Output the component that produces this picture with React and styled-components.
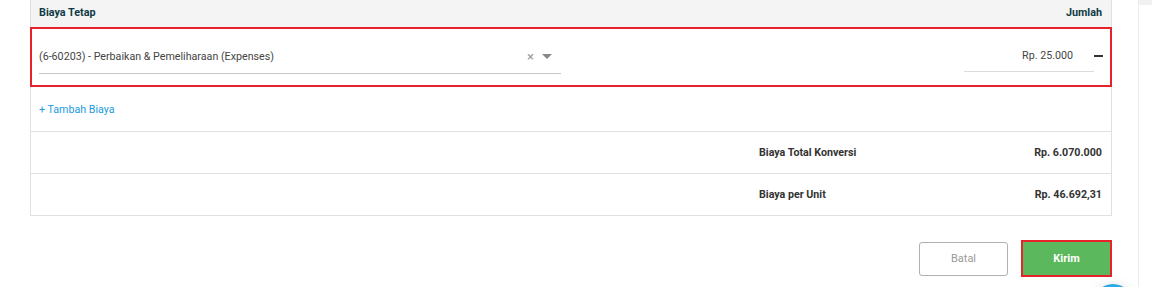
import React from "react";
import styled, { createGlobalStyle } from "styled-components";

const GlobalStyle = createGlobalStyle`
  html, body {
    margin: 0;
    padding: 0;
    background: #ffffff;
    font-family: Roboto, "Liberation Sans", Arial, sans-serif;
    overflow: hidden;
  }
`;

const Screen = styled.div`
  display: flex;
  width: 1152px;
  height: 287px;
  position: relative;
  overflow: hidden;
`;

const Panel = styled.div`
  width: 1139px;
  border-right: 1px solid #ececec;
  padding-left: 30px;
  box-sizing: border-box;
`;

const Gutter = styled.div`
  flex: 1;
  display: flex;
  flex-direction: column;
`;

const GutterTop = styled.div`
  height: 5px;
  background: #f1f1f1;
`;

const Table = styled.div`
  width: 1082px;
  border-left: 1px solid #e0e0e0;
  border-right: 1px solid #e0e0e0;
  border-bottom: 1px solid #e0e0e0;
  box-sizing: border-box;
`;

const HeadRow = styled.div`
  height: 27px;
  background: #f4f4f4;
  display: flex;
  align-items: center;
  justify-content: space-between;
  padding: 0 9px 2px 8px;
  box-sizing: border-box;
  font-size: 10.8px;
  font-weight: 700;
  color: #0f3a44;
`;

const ItemRow = styled.div`
  height: 60px;
  margin: 0 -1px;
  border: 2px solid #e8222a;
  display: flex;
  align-items: center;
  padding: 0 7px 0 7px;
  box-sizing: border-box;
`;

const Select = styled.div`
  width: 522px;
  height: 30px;
  margin-top: 3px;
  border-bottom: 1px solid #c8c8c8;
  display: flex;
  align-items: center;
  font-size: 10.7px;
  color: #444;
  box-sizing: border-box;
  padding-bottom: 4px;
`;

const SelectText = styled.span`
  flex: 1;
`;

const Clear = styled.span`
  color: #999;
  font-size: 13px;
  margin-right: 8px;
  line-height: 1;
`;

const Caret = styled.span`
  width: 0;
  height: 0;
  border-left: 5px solid transparent;
  border-right: 5px solid transparent;
  border-top: 5px solid #888;
  margin-right: 9px;
`;

const Amount = styled.div`
  margin-left: auto;
  width: 130px;
  height: 28px;
  margin-top: 1px;
  border-bottom: 1px solid #dcdcdc;
  display: flex;
  align-items: center;
  justify-content: flex-end;
  padding: 0 21px 3px 0;
  box-sizing: border-box;
  font-size: 10.7px;
  color: #444;
`;

const Minus = styled.span`
  width: 9px;
  height: 2px;
  background: #333;
  margin-bottom: 2px;
`;

const AddRow = styled.div`
  height: 44px;
  display: flex;
  align-items: center;
  padding-left: 8px;
  font-size: 10.7px;
  color: #1a9be0;
`;

const SumRow = styled.div`
  height: 42px;
  border-top: 1px solid #e0e0e0;
  display: flex;
  align-items: center;
  padding: 0 9px 0 728px;
  box-sizing: border-box;
  font-size: 10.7px;
  font-weight: 700;
  color: #333;
`;

const SumLabel = styled.span`
  flex: 1;
`;

const Actions = styled.div`
  width: 1082px;
  display: flex;
  justify-content: flex-end;
  align-items: center;
  gap: 13px;
  margin-top: 24px;
`;

const Button = styled.button`
  height: ${(p) => (p.$primary ? "37px" : "34px")};
  width: ${(p) => (p.$primary ? "91px" : "89px")};
  font-family: inherit;
  font-size: 11px;
  font-weight: ${(p) => (p.$primary ? 700 : 400)};
  color: ${(p) => (p.$primary ? "#ffffff" : "#9a9a9a")};
  background: ${(p) => (p.$primary ? "#5cb85c" : "#ffffff")};
  border: ${(p) => (p.$primary ? "2px solid #e8222a" : "1px solid #b0b0b0")};
  border-radius: ${(p) => (p.$primary ? "0" : "3px")};
  padding: 0;
`;

const ChatBubble = styled.div`
  position: absolute;
  left: 1093px;
  top: 284px;
  width: 40px;
  height: 40px;
  border-radius: 50%;
  background: #29a9e6;
  box-shadow: 0 0 12px rgba(0, 0, 0, 0.1);
`;

export default function App() {
  return (
    <>
      <GlobalStyle />
      <Screen>
        <Panel>
          <Table>
            <HeadRow>
              <span>Biaya Tetap</span>
              <span>Jumlah</span>
            </HeadRow>
            <ItemRow>
              <Select>
                <SelectText>(6-60203) - Perbaikan &amp; Pemeliharaan (Expenses)</SelectText>
                <Clear>×</Clear>
                <Caret />
              </Select>
              <Amount>Rp. 25.000</Amount>
              <Minus />
            </ItemRow>
            <AddRow>+ Tambah Biaya</AddRow>
            <SumRow>
              <SumLabel>Biaya Total Konversi</SumLabel>
              <span>Rp. 6.070.000</span>
            </SumRow>
            <SumRow>
              <SumLabel>Biaya per Unit</SumLabel>
              <span>Rp. 46.692,31</span>
            </SumRow>
          </Table>
          <Actions>
            <Button>Batal</Button>
            <Button $primary>Kirim</Button>
          </Actions>
        </Panel>
        <Gutter>
          <GutterTop />
        </Gutter>
        <ChatBubble />
      </Screen>
    </>
  );
}
